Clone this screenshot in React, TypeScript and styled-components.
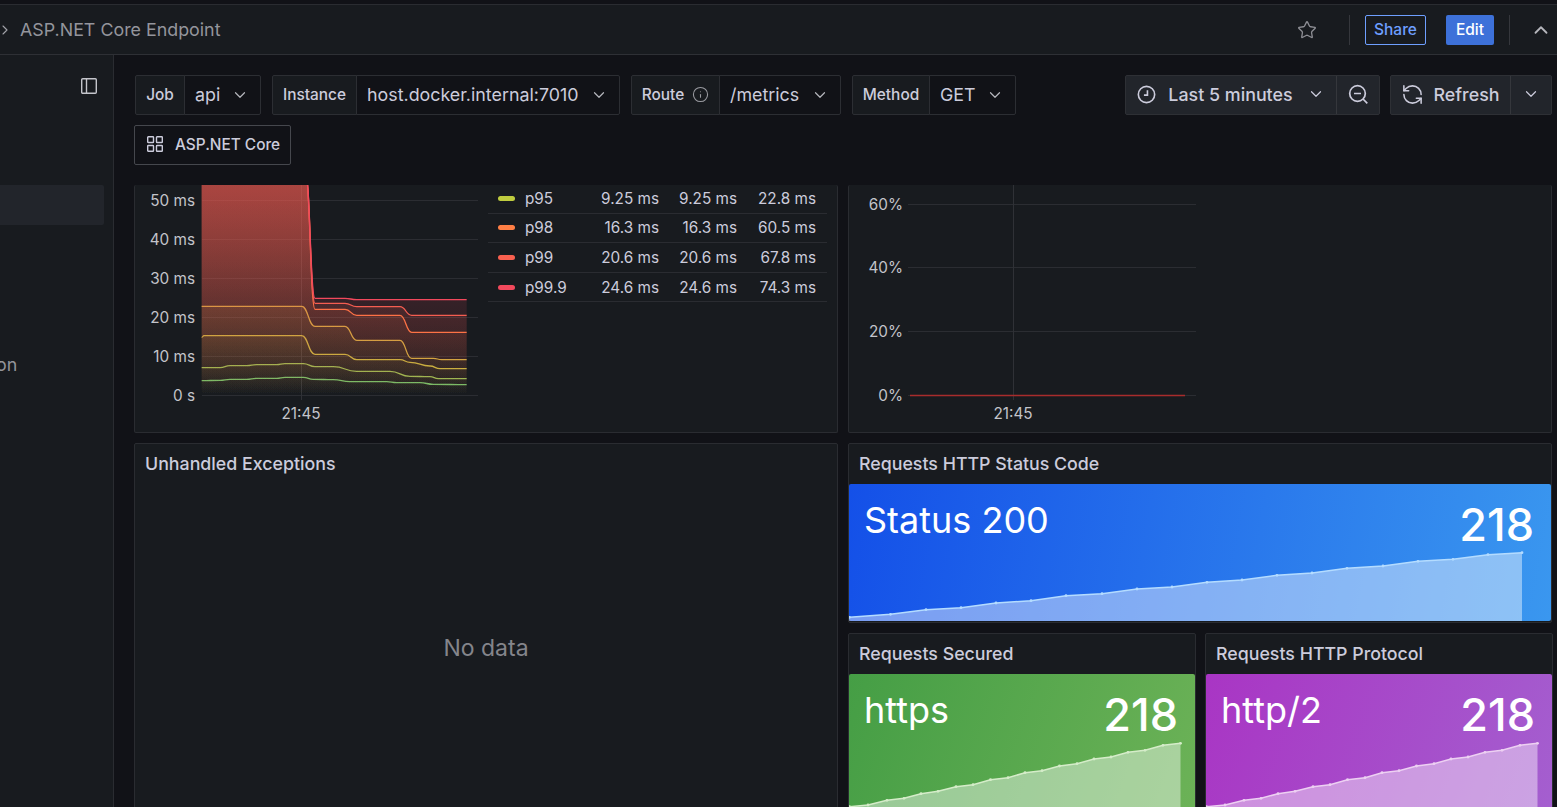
import React from "react";
import styled, { createGlobalStyle } from "styled-components";
import { ChevronDown, ChevronRight, ChevronUp, Info, RefreshCcw, Star } from "lucide-react";

const GlobalStyle = createGlobalStyle`
  html, body {
    margin: 0;
    padding: 0;
    background: #111217;
    overflow: hidden;
  }
  * {
    box-sizing: border-box;
  }
`;

const Page = styled.div`
  width: 1557px;
  height: 807px;
  overflow: hidden;
  display: flex;
  flex-direction: column;
  background: #111217;
  color: #ccccdc;
  font-family: Inter, "Noto Sans", sans-serif;
`;

const TopStrip = styled.div`
  height: 5px;
  flex: none;
  background: #111217;
  border-bottom: 1px solid #2a2c31;
`;

const Header = styled.header`
  height: 50px;
  flex: none;
  display: flex;
  align-items: center;
  padding-right: 5px;
  background: #181b1f;
  border-bottom: 1px solid #2e3035;
`;

const Crumb = styled.div`
  display: flex;
  align-items: center;
  gap: 7px;
  flex: 1;
  margin-left: -3px;
  font-size: 17.85px;
  color: #94959c;
  svg {
    color: #a3a4aa;
  }
`;

const StarButton = styled.span`
  display: flex;
  color: #8d8e94;
  margin-right: 32px;
`;

const Divider = styled.span`
  width: 1px;
  height: 30px;
  background: #35373c;
`;

const ShareButton = styled.button`
  height: 30px;
  width: 61px;
  margin: 0 20px 0 15px;
  padding: 0;
  border: 1px solid #6e9fff;
  border-radius: 2px;
  background: transparent;
  color: #6e9fff;
  font: 500 15.5px Inter, sans-serif;
`;

const EditButton = styled.button`
  height: 30px;
  width: 48px;
  margin-right: 15px;
  padding: 0;
  border: 0;
  border-radius: 2px;
  background: #3d71d9;
  color: #fff;
  font: 500 15.5px Inter, sans-serif;
`;

const CollapseButton = styled.span`
  display: flex;
  margin-left: 20px;
  color: #b5b6bc;
`;

const Body = styled.div`
  flex: 1;
  display: flex;
  min-height: 0;
`;

const Sidebar = styled.aside`
  width: 114px;
  flex: none;
  background: #181b1f;
  border-right: 1px solid #2a2c31;
  display: flex;
  flex-direction: column;
`;

const DockRow = styled.div`
  height: 130px;
  flex: none;
  display: flex;
  justify-content: flex-end;
  padding: 22px 15px 0 0;
  color: #c4c5cb;
`;

const NavRow = styled.div<{ $active?: boolean }>`
  width: 104px;
  height: 40px;
  flex: none;
  display: flex;
  align-items: center;
  padding-bottom: 2px;
  border-radius: 0 2px 2px 0;
  background: ${(p) => (p.$active ? "#22252b" : "transparent")};
  font-size: 17.85px;
  text-indent: -4px;
  color: #93949a;
`;

const Main = styled.main`
  flex: 1;
  min-width: 0;
  display: flex;
  flex-direction: column;
`;

const Toolbar = styled.div`
  height: 130px;
  flex: none;
  padding: 20px 5px 0 21px;
  display: flex;
  justify-content: space-between;
`;

const Variables = styled.div`
  display: flex;
  flex-wrap: wrap;
  align-content: flex-start;
  gap: 10px 11px;
  width: 890px;
`;

const VariableGroup = styled.div`
  display: flex;
  height: 40px;
`;

const VariableLabel = styled.div<{ $width: number }>`
  width: ${(p) => p.$width}px;
  display: flex;
  align-items: center;
  justify-content: center;
  gap: 8px;
  padding-bottom: 2px;
  border: 1px solid #2c2e33;
  border-radius: 2px 0 0 2px;
  background: #181b1f;
  font-size: 15.4px;
  font-weight: 500;
  color: #ccccdc;
  svg {
    color: #9a9ba1;
  }
`;

const VariableValue = styled.div<{ $width: number }>`
  width: ${(p) => p.$width}px;
  display: flex;
  align-items: center;
  justify-content: space-between;
  margin-left: -1px;
  padding: 0 11px 2px 10px;
  border: 1px solid #2c2e33;
  border-radius: 0 2px 2px 0;
  background: #111217;
  font-size: 17.85px;
  color: #ccccdc;
  svg {
    color: #b5b6bc;
    position: relative;
    top: 1px;
  }
`;

const RowLink = styled.div`
  width: 157px;
  height: 40px;
  margin-left: -1px;
  display: flex;
  align-items: center;
  gap: 11px;
  padding: 0 0 2px 11px;
  border: 1px solid #45474d;
  border-radius: 2px;
  font-size: 15.4px;
  font-weight: 500;
  color: #ccccdc;
`;

const TimeControls = styled.div`
  display: flex;
  gap: 10px;
`;

const ButtonGroup = styled.div`
  display: flex;
  height: 40px;
  border: 1px solid #2e3035;
  border-radius: 2px;
  background: #22252b;
  font-size: 17.85px;
  font-weight: 500;
  color: #ccccdc;
`;

const GroupButton = styled.div<{ $width: number; $divided?: boolean }>`
  width: ${(p) => p.$width}px;
  display: flex;
  align-items: center;
  justify-content: center;
  gap: 12px;
  padding-bottom: 2px;
  border-left: ${(p) => (p.$divided ? "1px solid #35373c" : "0")};
`;

const RangeLabel = styled.span`
  margin-right: 2px;
`;

const RefreshIcon = styled(RefreshCcw)`
  margin: 0 -2px 0 -1px;
`;

const Panels = styled.div`
  flex: 1;
  min-height: 0;
  overflow: hidden;
  display: grid;
  grid-template-columns: 704px 704px;
  grid-template-rows: 248px auto;
  gap: 10px;
  padding-left: 20px;
`;

const Panel = styled.section`
  background: #181b1f;
  border: 1px solid #2a2c31;
  border-radius: 2px;
  overflow: hidden;
  display: flex;
  flex-direction: column;
  min-height: 0;
`;

const GraphPanel = styled(Panel)`
  flex-direction: row;
  border-top: 0;
`;

const ExceptionsPanel = styled(Panel)`
  height: 370px;
`;

const PanelTitle = styled.h2`
  height: 40px;
  flex: none;
  margin: 0;
  padding: 0 0 2px 10px;
  display: flex;
  align-items: center;
  font-size: 17.8px;
  font-weight: 500;
  color: #ccccdc;
`;

const NoData = styled.div`
  flex: 1;
  display: flex;
  align-items: center;
  justify-content: center;
  font-size: 23px;
  color: #84858b;
`;

const ChartSvg = styled.svg`
  flex: none;
  display: block;
  text {
    font-family: Inter, sans-serif;
    font-size: 15.3px;
    fill: #c3c4ca;
  }
`;

const Legend = styled.div`
  width: 339px;
  flex: none;
  margin-top: -1px;
`;

const LegendRow = styled.div`
  height: 29.6px;
  display: grid;
  grid-template-columns: 37px 70px 64px 78px 79px;
  align-items: center;
  border-bottom: 1px solid #2a2c31;
  font-size: 15.3px;
  color: #ccccdc;
`;

const Swatch = styled.i<{ $color: string }>`
  display: block;
  width: 17px;
  height: 5px;
  margin-left: 10px;
  border-radius: 3px;
  background: ${(p) => p.$color};
`;

const LegendValue = styled.span`
  text-align: right;
`;

const RightStack = styled.div`
  display: flex;
  flex-direction: column;
  gap: 10px;
`;

const StatusPanel = styled(Panel)`
  height: 180px;
`;

const StatRow = styled.div`
  display: grid;
  grid-template-columns: 348px 348px;
  gap: 9px;
`;

const SmallStatPanel = styled(Panel)`
  height: 180px;
`;

const Stat = styled.div<{ $gradient: string }>`
  position: relative;
  flex: none;
  height: 137px;
  border-radius: 2px;
  background: ${(p) => p.$gradient};
  display: flex;
  justify-content: space-between;
  padding: 13px 17px 0 15px;
  color: #fff;
`;

const StatName = styled.span`
  font-size: 36px;
  line-height: 46px;
`;

const StatValue = styled.span`
  margin-top: 1px;
  font-size: 45px;
  font-weight: 500;
  line-height: 54px;
`;

const Spark = styled.svg`
  position: absolute;
  left: 0;
  top: 0;
  width: 100%;
  height: 100%;
`;

type Point = [number, number];

const curve = (zoomed: Point[]) =>
  zoomed.map(([x, y]) => [200 + x / 3, 280 + y / 3] as Point);

// smooth horizontal steps, same look as the grafana "smooth" line mode
const linePath = (pts: Point[]) =>
  pts.reduce((d, [x, y], i) => {
    if (i === 0) return `M${x} ${y}`;
    const [px, py] = pts[i - 1];
    const mid = (px + x) / 2;
    return `${d} C${mid} ${py} ${mid} ${y} ${x} ${y}`;
  }, "");

const series: { name: string; color: string; pts: Point[] }[] = [
  {
    name: "p50",
    color: "#73bf69",
    pts: curve([[5, 302], [60, 301], [90, 298], [140, 298], [170, 295], [230, 295], [255, 292], [310, 292], [340, 298], [400, 299], [450, 305], [560, 305], [590, 308], [660, 308], [700, 313], [800, 314]]),
  },
  {
    name: "p75",
    color: "#96bb52",
    pts: curve([[5, 263], [60, 263], [90, 257], [140, 257], [170, 254], [230, 254], [255, 251], [310, 251], [345, 260], [400, 260], [470, 274], [570, 274], [630, 289], [690, 290], [715, 296], [800, 296]]),
  },
  {
    name: "p90",
    color: "#c4b83e",
    pts: curve([[5, 172], [12, 167], [305, 167], [345, 223], [435, 223], [470, 239], [600, 239], [630, 247], [690, 258], [720, 266], [800, 266]]),
  },
  {
    name: "p95",
    color: "#cdb03e",
    pts: curve([[5, 79], [305, 79], [345, 139], [435, 139], [470, 181], [600, 181], [635, 235], [700, 235], [725, 239], [800, 239]]),
  },
  {
    name: "p98",
    color: "#ff7941",
    pts: curve([[5, -320], [316, -320], [345, 88], [435, 88], [470, 106], [600, 106], [635, 157], [800, 157]]),
  },
  {
    name: "p99",
    color: "#f5604f",
    pts: curve([[5, -320], [316, -320], [345, 70], [435, 70], [470, 80], [600, 80], [635, 106], [800, 106]]),
  },
  {
    name: "p99.9",
    color: "#f2495c",
    pts: curve([[5, -320], [316, -320], [345, 55], [435, 55], [470, 59], [800, 59]]),
  },
];

const legendRows = [
  { name: "p95", color: "#bfcc3f", values: ["9.25 ms", "9.25 ms", "22.8 ms"] },
  { name: "p98", color: "#ff7f45", values: ["16.3 ms", "16.3 ms", "60.5 ms"] },
  { name: "p99", color: "#f9604f", values: ["20.6 ms", "20.6 ms", "67.8 ms"] },
  { name: "p99.9", color: "#f2495c", values: ["24.6 ms", "24.6 ms", "74.3 ms"] },
];

const LatencyChart = () => (
  <ChartSvg width={353} height={248} viewBox="135 185 353 248">
    <defs>
      {series.map((s) => (
        <linearGradient key={s.name} id={`fill-${s.name}`} gradientUnits="userSpaceOnUse" x1="0" y1="185" x2="0" y2="395">
          <stop offset="0" stopColor={s.color} stopOpacity={0.3} />
          <stop offset="1" stopColor={s.color} stopOpacity={0} />
        </linearGradient>
      ))}
    </defs>
    {[200.5, 239.5, 278.5, 317.5, 356.5, 395.5].map((y) => (
      <line key={y} x1="202" x2="478" y1={y} y2={y} stroke="#2b2d32" />
    ))}
    <line x1="301.5" x2="301.5" y1="185" y2="400" stroke="#2f3136" />
    {["50 ms", "40 ms", "30 ms", "20 ms", "10 ms", "0 s"].map((t, i) => (
      <text key={t} x="195" y={205.5 + i * 39} textAnchor="end">
        {t}
      </text>
    ))}
    <text x="301" y="418.5" textAnchor="middle">
      21:45
    </text>
    {series.map((s) => {
      const d = linePath(s.pts);
      const first = s.pts[0];
      const last = s.pts[s.pts.length - 1];
      return (
        <g key={s.name}>
          <path d={`${d} L${last[0]} 395 L${first[0]} 395 Z`} fill={`url(#fill-${s.name})`} />
          <path d={d} fill="none" stroke={s.color} strokeWidth={1.3} />
        </g>
      );
    })}
  </ChartSvg>
);

const ErrorRateChart = () => (
  <ChartSvg width={702} height={248} viewBox="849 185 702 248">
    {[204.5, 267.5, 331.5, 395.5].map((y) => (
      <line key={y} x1="908" x2="1196" y1={y} y2={y} stroke="#2b2d32" />
    ))}
    <line x1="1013.5" x2="1013.5" y1="185" y2="400" stroke="#2f3136" />
    {["60%", "40%", "20%", "0%"].map((t, i) => (
      <text key={t} x="903" y={[209.5, 272.5, 336.5, 400.5][i]} textAnchor="end">
        {t}
      </text>
    ))}
    <text x="1013" y="418.5" textAnchor="middle">
      21:45
    </text>
    <line x1="910" x2="1185" y1="395.5" y2="395.5" stroke="#a82c2c" strokeWidth={1.5} />
  </ChartSvg>
);

const statusPts: Point[] = [
  [849.5, 617.3], [890.5, 614.3], [926, 609.7], [961, 607.7], [996, 603], [1031, 600.7], [1066, 595.7], [1102, 593.7], [1137, 589], [1172, 587],
  [1207, 582.3], [1242, 580], [1277, 575.3], [1312, 573], [1347, 568.3], [1383, 566], [1418, 561.3], [1453, 559.3], [1488, 554.7], [1522, 552.7],
];

const smallPts: Point[] = [
  [849.5, 805.7], [868, 804], [887, 799.3], [904, 797.3], [921, 792.7], [938, 790.3], [956, 785.7], [973, 783.7], [990.5, 778.7], [1008, 776.7],
  [1025, 771.7], [1042, 769.7], [1059.5, 765], [1077, 762.7], [1094, 758], [1111, 756], [1128, 751.3], [1145, 749.3], [1163, 744.3], [1180.5, 742.3],
];

function Sparkline({ pts, box, line, bottom }: { pts: Point[]; box: string; line: string; bottom: number }) {
  const d = pts.map(([x, y], i) => `${i ? "L" : "M"}${x} ${y}`).join(" ");
  const first = pts[0];
  const last = pts[pts.length - 1];
  return (
    <Spark viewBox={box} preserveAspectRatio="none">
      <path d={`${d} L${last[0]} ${bottom} L${first[0] - 1} ${bottom} Z`} fill="#fff" fillOpacity={0.43} />
      <path d={d} fill="none" stroke={line} strokeWidth={1.5} />
      {pts.map(([x, y]) => (
        <circle key={x} cx={x} cy={y} r={1.4} fill={line} />
      ))}
    </Spark>
  );
}

const PanelIcon = () => (
  <svg width="18" height="18" viewBox="0 0 18 18" fill="none" stroke="currentColor" strokeWidth="1.4">
    <rect x="1.7" y="1.7" width="14.6" height="14.6" rx="1" />
    <line x1="6.5" y1="1.7" x2="6.5" y2="16.3" />
  </svg>
);

const GridIcon = () => (
  <svg width="18" height="18" viewBox="0 0 18 18" fill="none" stroke="#ccccdc" strokeWidth="1.4">
    <rect x="1.7" y="1.7" width="5.8" height="5.8" rx="0.6" />
    <rect x="10.5" y="1.7" width="5.8" height="5.8" rx="0.6" />
    <rect x="1.7" y="10.5" width="5.8" height="5.8" rx="0.6" />
    <rect x="10.5" y="10.5" width="5.8" height="5.8" rx="0.6" />
  </svg>
);

const ClockIcon = () => (
  <svg width="19" height="19" viewBox="0 0 20 20" fill="none" stroke="#ccccdc" strokeWidth="1.7">
    <circle cx="10" cy="10" r="8.6" />
    <path d="M11 5.5V10.6H7.3" />
  </svg>
);

const ZoomOutIcon = () => (
  <svg width="21" height="21" viewBox="0 0 21 21" fill="none" stroke="#ccccdc" strokeWidth="1.7">
    <circle cx="9.5" cy="9.5" r="7.8" />
    <path d="M6 9.5H13M15 15L19.3 19.3" />
  </svg>
);

const Chevron = () => <ChevronDown size={18} strokeWidth={1.6} />;

function App() {
  return (
    <Page>
      <GlobalStyle />
      <TopStrip />
      <Header>
        <Crumb>
          <ChevronRight size={16} strokeWidth={1.6} />
          ASP.NET Core Endpoint
        </Crumb>
        <StarButton>
          <Star size={20} strokeWidth={1.6} />
        </StarButton>
        <Divider />
        <ShareButton>Share</ShareButton>
        <EditButton>Edit</EditButton>
        <Divider />
        <CollapseButton>
          <ChevronUp size={22} strokeWidth={2} />
        </CollapseButton>
      </Header>
      <Body>
        <Sidebar>
          <DockRow>
            <PanelIcon />
          </DockRow>
          <NavRow $active />
          <NavRow />
          <NavRow />
          <NavRow />
          <NavRow>on</NavRow>
        </Sidebar>
        <Main>
          <Toolbar>
            <Variables>
              <VariableGroup>
                <VariableLabel $width={50}>Job</VariableLabel>
                <VariableValue $width={77}>
                  api <Chevron />
                </VariableValue>
              </VariableGroup>
              <VariableGroup>
                <VariableLabel $width={85}>Instance</VariableLabel>
                <VariableValue $width={264}>
                  host.docker.internal:7010 <Chevron />
                </VariableValue>
              </VariableGroup>
              <VariableGroup>
                <VariableLabel $width={89}>
                  Route <Info size={17} strokeWidth={1.5} />
                </VariableLabel>
                <VariableValue $width={122}>
                  /metrics <Chevron />
                </VariableValue>
              </VariableGroup>
              <VariableGroup>
                <VariableLabel $width={78}>Method</VariableLabel>
                <VariableValue $width={87}>
                  GET <Chevron />
                </VariableValue>
              </VariableGroup>
              <RowLink>
                <GridIcon />
                ASP.NET Core
              </RowLink>
            </Variables>
            <TimeControls>
              <ButtonGroup>
                <GroupButton $width={210}>
                  <ClockIcon />
                  <RangeLabel>Last 5 minutes</RangeLabel>
                  <Chevron />
                </GroupButton>
                <GroupButton $width={43} $divided>
                  <ZoomOutIcon />
                </GroupButton>
              </ButtonGroup>
              <ButtonGroup>
                <GroupButton $width={119}>
                  <RefreshIcon size={23} strokeWidth={1.6} />
                  Refresh
                </GroupButton>
                <GroupButton $width={41} $divided>
                  <Chevron />
                </GroupButton>
              </ButtonGroup>
            </TimeControls>
          </Toolbar>
          <Panels>
            <GraphPanel>
              <LatencyChart />
              <Legend>
                {legendRows.map((row) => (
                  <LegendRow key={row.name}>
                    <Swatch $color={row.color} />
                    <span>{row.name}</span>
                    {row.values.map((v, i) => (
                      <LegendValue key={i}>{v}</LegendValue>
                    ))}
                  </LegendRow>
                ))}
              </Legend>
            </GraphPanel>
            <GraphPanel>
              <ErrorRateChart />
            </GraphPanel>
            <ExceptionsPanel>
              <PanelTitle>Unhandled Exceptions</PanelTitle>
              <NoData>No data</NoData>
            </ExceptionsPanel>
            <RightStack>
              <StatusPanel>
                <PanelTitle>Requests HTTP Status Code</PanelTitle>
                <Stat $gradient="linear-gradient(100deg, #1450e8, #3a97ef)">
                  <Sparkline pts={statusPts} box="849 484 702 137" line="#b4dcff" bottom={621} />
                  <StatName>Status 200</StatName>
                  <StatValue>218</StatValue>
                </Stat>
              </StatusPanel>
              <StatRow>
                <SmallStatPanel>
                  <PanelTitle>Requests Secured</PanelTitle>
                  <Stat $gradient="linear-gradient(110deg, #459e45, #6cb257)">
                    <Sparkline pts={smallPts} box="849 673 346 137" line="#d5ecc9" bottom={810} />
                    <StatName>https</StatName>
                    <StatValue>218</StatValue>
                  </Stat>
                </SmallStatPanel>
                <SmallStatPanel>
                  <PanelTitle>Requests HTTP Protocol</PanelTitle>
                  <Stat $gradient="linear-gradient(110deg, #a935c4, #a45fcf)">
                    <Sparkline pts={smallPts} box="849 673 346 137" line="#edd0f2" bottom={810} />
                    <StatName>http/2</StatName>
                    <StatValue>218</StatValue>
                  </Stat>
                </SmallStatPanel>
              </StatRow>
            </RightStack>
          </Panels>
        </Main>
      </Body>
    </Page>
  );
}

export default App;
